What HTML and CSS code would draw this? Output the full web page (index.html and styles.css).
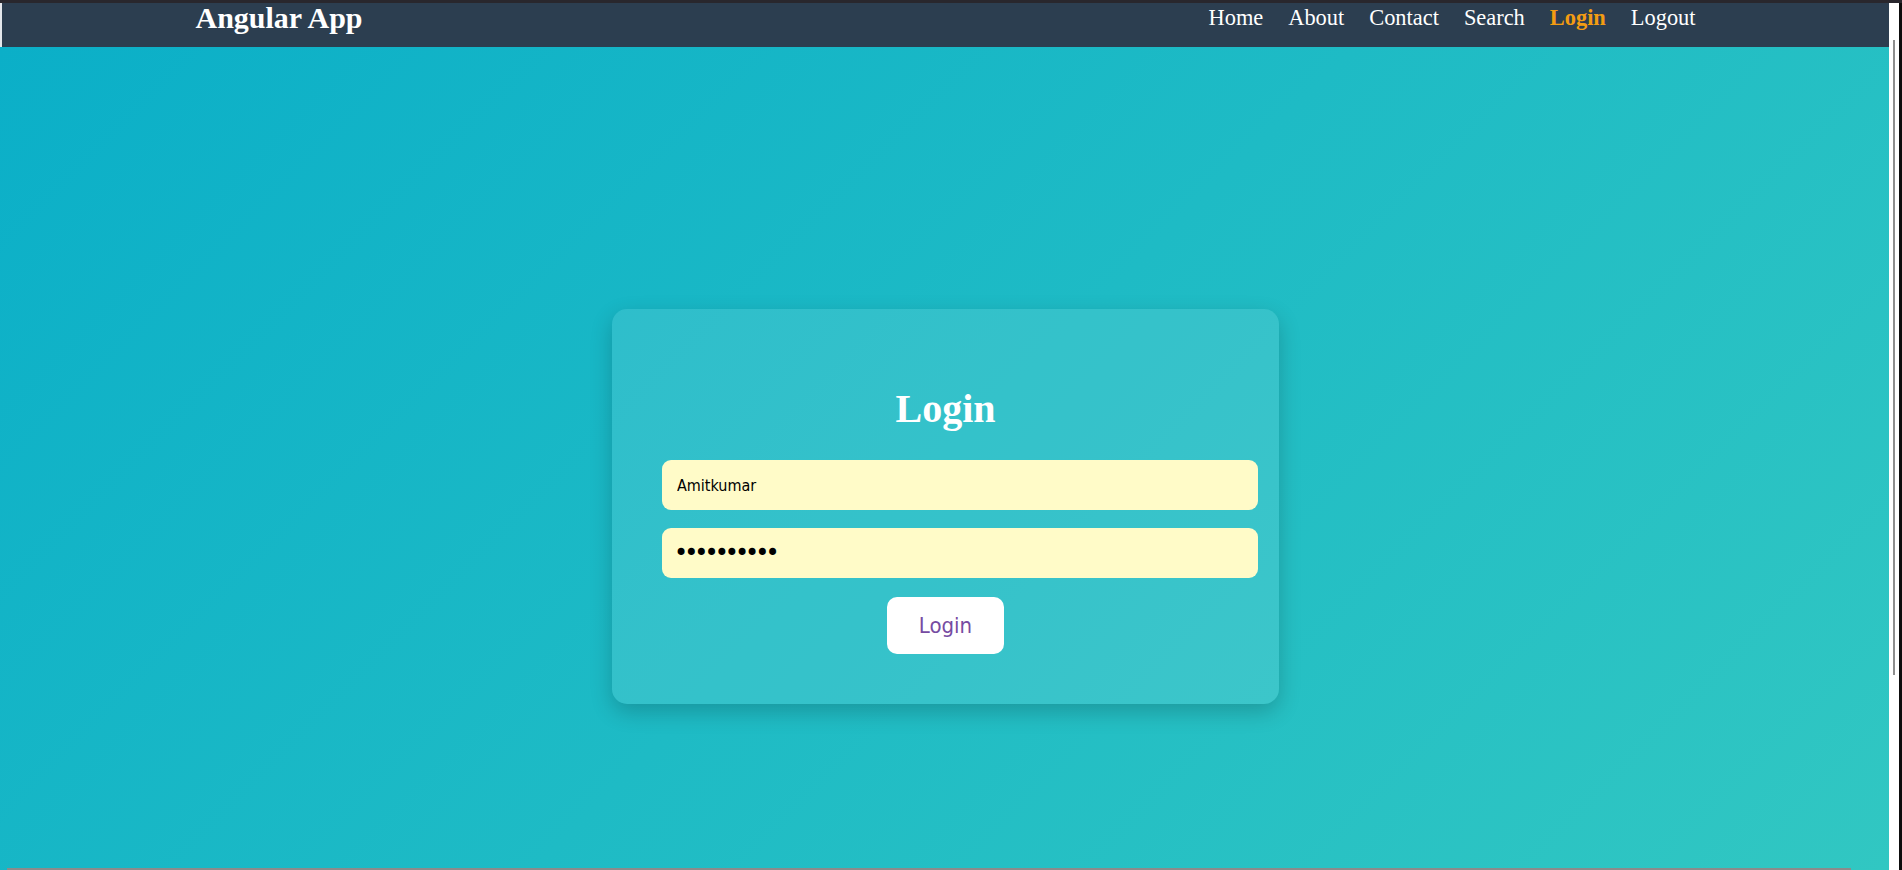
FILE: index.html
```html
<!DOCTYPE html>
<html lang="en">
<head>
<meta charset="utf-8">
<title>Angular App</title>
<link rel="stylesheet" href="styles.css">
</head>
<body>
<div class="screen">
  <div class="topline"></div>
  <div class="window">
    <div class="page">
      <header class="navbar">
        <div class="container">
          <span class="brand">Angular App</span>
          <nav class="links">
            <a href="#">Home</a>
            <a href="#">About</a>
            <a href="#">Contact</a>
            <a href="#">Search</a>
            <a href="#" class="active">Login</a>
            <a href="#">Logout</a>
          </nav>
        </div>
      </header>
      <main class="content">
        <form class="card" onsubmit="return false">
          <h2 class="title">Login</h2>
          <input class="field" type="text" value="Amitkumar">
          <input class="field field-pass" type="password" value="abcdefghij">
          <button class="btn" type="submit">Login</button>
        </form>
      </main>
      <div class="hscroll"></div>
    </div>
    <div class="vscroll"><div class="thumb"></div></div>
    <div class="edge"></div>
  </div>
</div>
</body>
</html>
```
FILE: styles.css
```css
* { box-sizing: border-box; }
html, body { margin: 0; padding: 0; height: 100%; }
body { overflow: hidden; background: #ffffff; font-family: "Liberation Serif", serif; }

.screen { display: flex; flex-direction: column; height: 100vh; }
.topline { height: 3px; background: #29272d; flex: none; }
.window { flex: 1; display: flex; min-height: 0; }

.page { position: relative; flex: 1; display: flex; flex-direction: column; min-width: 0; }

.navbar {
  height: 44px;
  flex: none;
  background: #2c3e50;
  border-left: 2px solid #e4e7eb;
}
.container {
  width: 1500px;
  margin: 0 auto;
  display: flex;
  justify-content: space-between;
  align-items: flex-start;
}
.brand {
  color: #ffffff;
  font-weight: bold;
  font-size: 30px;
  line-height: 30px;
}
.links { display: flex; gap: 25px; }
.links a {
  color: #ffffff;
  text-decoration: none;
  font-size: 22.4px;
  line-height: 29px;
}
.links a.active { color: #f39c12; font-weight: bold; }

.content {
  flex: 1;
  background: linear-gradient(135deg, #0bafc8 0%, #31c7c2 100%);
  display: flex;
  justify-content: center;
  align-items: flex-start;
  padding-top: 262px;
  padding-left: 2px;
}
.card {
  width: 667px;
  padding: 50px;
  background: rgba(255, 255, 255, 0.1);
  border-radius: 15px;
  box-shadow: 0 8px 22px rgba(0, 0, 0, 0.2);
  display: flex;
  flex-direction: column;
  align-items: flex-start;
}
.title {
  align-self: stretch;
  text-align: center;
  margin: 27px 0 28px;
  color: #ffffff;
  font-size: 40px;
  line-height: 46px;
  font-weight: bold;
}
.field {
  flex: none;
  width: 596px;
  height: 50px;
  border: none;
  outline: none;
  border-radius: 9px;
  background: #fffbc8;
  color: #000000;
  padding: 0 15px;
  font-family: "DejaVu Sans Condensed", "DejaVu Sans", sans-serif;
  font-stretch: condensed;
  font-size: 16px;
}
.field + .field { margin-top: 18px; }
.field-pass {
  font-family: "DejaVu Sans", sans-serif;
  font-stretch: normal;
  font-size: 24px;
  letter-spacing: -4px;
  padding-left: 12px;
}
.btn {
  align-self: center;
  margin-top: 19px;
  border: none;
  border-radius: 10px;
  background: #ffffff;
  color: #764ba2;
  padding: 15px 32px;
  font-family: "DejaVu Sans Condensed", "DejaVu Sans", sans-serif;
  font-stretch: condensed;
  font-size: 22px;
  line-height: 27px;
  cursor: pointer;
}

.hscroll {
  position: absolute;
  left: 7px;
  bottom: 0;
  width: 1844px;
  height: 2px;
  background: #8b8b8b;
}
.vscroll { width: 10px; flex: none; background: #ffffff; padding-top: 37px; }
.thumb { width: 2px; height: 635px; margin-left: 4px; background: #8e8e8e; }
.edge { width: 3px; flex: none; background: #0d0d0d; }
```
